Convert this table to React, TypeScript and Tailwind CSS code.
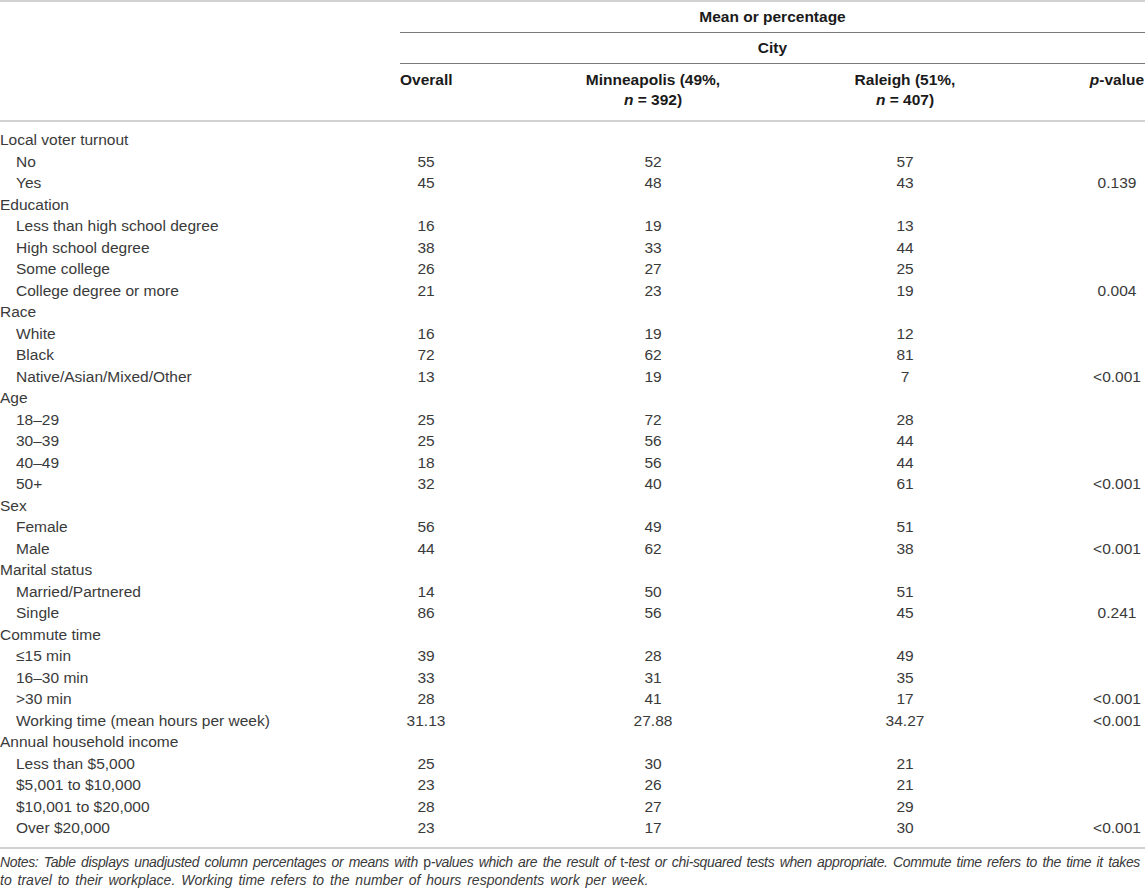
const cols = "grid grid-cols-[400px_52px_402px_102px_133px_56px]";

type Row = { label: string; group?: boolean; v?: [string, string, string, string] };

const rows: Row[] = [
  { label: "Local voter turnout", group: true },
  { label: "No", v: ["55", "52", "57", ""] },
  { label: "Yes", v: ["45", "48", "43", "0.139"] },
  { label: "Education", group: true },
  { label: "Less than high school degree", v: ["16", "19", "13", ""] },
  { label: "High school degree", v: ["38", "33", "44", ""] },
  { label: "Some college", v: ["26", "27", "25", ""] },
  { label: "College degree or more", v: ["21", "23", "19", "0.004"] },
  { label: "Race", group: true },
  { label: "White", v: ["16", "19", "12", ""] },
  { label: "Black", v: ["72", "62", "81", ""] },
  { label: "Native/Asian/Mixed/Other", v: ["13", "19", "7", "<0.001"] },
  { label: "Age", group: true },
  { label: "18–29", v: ["25", "72", "28", ""] },
  { label: "30–39", v: ["25", "56", "44", ""] },
  { label: "40–49", v: ["18", "56", "44", ""] },
  { label: "50+", v: ["32", "40", "61", "<0.001"] },
  { label: "Sex", group: true },
  { label: "Female", v: ["56", "49", "51", ""] },
  { label: "Male", v: ["44", "62", "38", "<0.001"] },
  { label: "Marital status", group: true },
  { label: "Married/Partnered", v: ["14", "50", "51", ""] },
  { label: "Single", v: ["86", "56", "45", "0.241"] },
  { label: "Commute time", group: true },
  { label: "≤15 min", v: ["39", "28", "49", ""] },
  { label: "16–30 min", v: ["33", "31", "35", ""] },
  { label: ">30 min", v: ["28", "41", "17", "<0.001"] },
  { label: "Working time (mean hours per week)", v: ["31.13", "27.88", "34.27", "<0.001"] },
  { label: "Annual household income", group: true },
  { label: "Less than $5,000", v: ["25", "30", "21", ""] },
  { label: "$5,001 to $10,000", v: ["23", "26", "21", ""] },
  { label: "$10,001 to $20,000", v: ["28", "27", "29", ""] },
  { label: "Over $20,000", v: ["23", "17", "30", "<0.001"] },
];

export default function App() {
  return (
    <div className="w-[1145px] bg-white text-[#3a3a3a] font-['Liberation_Sans',Arial,sans-serif] text-[15.5px]">
      {/* header */}
      <div className="h-[2px] bg-[#d2d2d2]" />
      <div className={`${cols} h-[31px]`}>
        <div className="col-start-2 col-span-5 flex items-center justify-center font-bold text-[#1a1a1a] border-b-[1.5px] border-[#7a7a7a]">
          Mean or percentage
        </div>
      </div>
      <div className={`${cols} h-[31px]`}>
        <div className="col-start-2 col-span-5 flex items-center justify-center font-bold text-[#1a1a1a] border-b-[1.5px] border-[#7a7a7a]">
          City
        </div>
      </div>
      <div className={`${cols} pt-[6px] pb-[10px] leading-[20px] font-bold text-[#1a1a1a] whitespace-nowrap`}>
        <div />
        <div className="text-center">Overall</div>
        <div className="text-center">
          Minneapolis (49%,
          <br />
          <i>n</i> = 392)
        </div>
        <div className="flex flex-col items-center">
          <span>Raleigh (51%,</span>
          <span>
            <i>n</i> = 407)
          </span>
        </div>
        <div className="col-start-6 flex justify-center">
          <span>
            <i>p</i>-value
          </span>
        </div>
      </div>
      <div className="h-[2px] bg-[#d2d2d2]" />

      {/* body */}
      <div className="pt-[7px] pb-[8px]">
        {rows.map((r, i) => (
          <div key={i} className={`${cols} h-[21.5px] leading-[21.5px] whitespace-nowrap`}>
            <div className={r.group ? "" : "pl-[16px]"}>{r.label}</div>
            {r.v && (
              <>
                <div className="flex justify-center">{r.v[0]}</div>
                <div className="flex justify-center">{r.v[1]}</div>
                <div className="flex justify-center">{r.v[2]}</div>
                <div className="col-start-6 flex justify-center">{r.v[3]}</div>
              </>
            )}
          </div>
        ))}
      </div>
      <div className="h-[2px] bg-[#d2d2d2]" />

      {/* notes */}
      <div className="mt-[4px] text-[14px] leading-[18px] italic text-[#3a3a3a]">
        <div className="pr-[5px] text-justify [text-align-last:justify] whitespace-nowrap tracking-[-0.35px]">
          Notes: Table displays unadjusted column percentages or means with <span className="not-italic">p</span>-values which are the result of{" "}
          <span className="not-italic">t</span>-test or chi-squared tests when appropriate. Commute time refers to the time it takes
        </div>
        <div className="[word-spacing:2px]">to travel to their workplace. Working time refers to the number of hours respondents work per week.</div>
      </div>
    </div>
  );
}
